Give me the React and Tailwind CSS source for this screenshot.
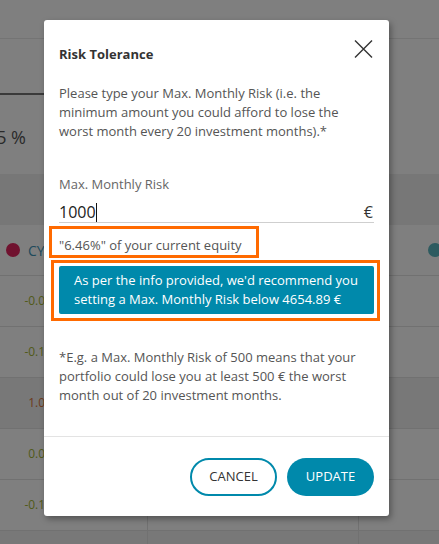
import React from "react";

const TEAL = "bg-[#0089ab]";

const rows = [
  { kind: "name" },
  { value: "-0.02", tone: "text-[#a3b536]" },
  { value: "-0.11", tone: "text-[#a3b536]" },
  { value: "1.04", tone: "text-[#d9773a]", shaded: true },
  { value: "0.03", tone: "text-[#a3b536]" },
  { value: "-0.12", tone: "text-[#a3b536]" },
];

const Row = ({ row }) => (
  <div
    className={`grid grid-cols-[147px_211px_1fr] h-[51px] border-b border-[#e2e2e2] ${
      row.shaded ? "bg-[#f0f0f0]" : ""
    }`}
  >
    <div className="flex items-center">
      {row.kind === "name" ? (
        <div className="flex items-center pl-[6px] gap-[8px]">
          <span className="w-[14px] h-[14px] rounded-full bg-[#e0245e]" />
          <span className="text-[14px] text-[#3e94b8]">CYBR</span>
        </div>
      ) : (
        <div className={`w-[52px] text-right text-[12px] ${row.tone}`}>{row.value}</div>
      )}
    </div>
    <div className="border-l border-[#e2e2e2]" />
    <div className="border-l border-[#e2e2e2] flex items-center pl-[69px]">
      {row.kind === "name" && <span className="w-[14px] h-[14px] rounded-full bg-[#5cb6c0] shrink-0" />}
    </div>
  </div>
);

const CloseIcon = () => (
  <svg width="19" height="18" viewBox="0 0 19 18" fill="none" stroke="#333" strokeWidth="1.4">
    <path d="M1 0.5 L18 17.5 M18 0.5 L1 17.5" />
  </svg>
);

export default function App() {
  return (
    <div className="relative w-full h-[544px] overflow-hidden bg-white font-['Open_Sans',sans-serif]">
      {/* page behind the dialog */}
      <div className="h-[39px] border-b border-[#e8e8e8]" />
      <div className="h-[56px] flex flex-col justify-end">
        <div className="w-[140px] h-[2px] bg-[#757575]" />
      </div>
      <div className="h-[79px] flex items-center pt-[5px]">
        <div className="w-[26px] overflow-hidden flex justify-end whitespace-nowrap text-[18px] text-[#555]">
          0.55 %
        </div>
      </div>
      <div className="h-[51px] bg-[#eeeeee]" />
      {rows.map((row, i) => (
        <Row key={i} row={row} />
      ))}
      <div className="grid grid-cols-[147px_211px_1fr] h-[40px] bg-[#f0f0f0]">
        <div />
        <div className="border-l border-[#e2e2e2]" />
        <div className="border-l border-[#e2e2e2]" />
      </div>

      {/* backdrop */}
      <div className="absolute inset-0 bg-black/50" />

      {/* dialog */}
      <div className="absolute left-[44px] top-[20px] w-[345px] h-[496px] bg-white rounded-[3px] shadow-[2px_3px_6px_rgba(0,0,0,0.35)] flex flex-col">
        <div className="px-[15px] pt-[20px] flex justify-between items-start">
          <h2 className="pt-[5px] text-[13px] leading-[18px] font-bold text-[#333]">Risk Tolerance</h2>
          <button className="mr-[1px]">
            <CloseIcon />
          </button>
        </div>

        <div className="px-[15px]">
          <p className="mt-[21px] text-[13px] leading-[19px] text-[#555]">
            Please type your Max. Monthly Risk (i.e. the minimum amount you could afford to lose the
            worst month every 20 investment months).*
          </p>

          <div className="mt-[34px] text-[13px] leading-[19px] text-[#666]">Max. Monthly Risk</div>
          <div className="h-[29px] pt-[8px] flex items-center justify-between border-b border-[#cfcfcf]">
            <div className="flex items-center text-[16px] text-[#222]">
              1000
              <span className="w-[1px] h-[19px] bg-[#111]" />
            </div>
            <span className="text-[16px] text-[#333] pr-[1px]">€</span>
          </div>

          <div className="relative mt-[13px] text-[13px] leading-[19px] text-[#555]">
            &quot;6.46%&quot; of your current equity
            <span className="absolute left-[-10px] top-[-10px] w-[210px] h-[32px] border-[3px] border-[#ff6a00]" />
          </div>

          <div className="relative mt-[11px]">
            <div className={`${TEAL} rounded-[2px] h-[48px] px-[15px] pt-[5px] text-[13px] leading-[19px] text-white`}>
              As per the info provided, we&apos;d recommend you setting a Max. Monthly Risk below 4654.89 €
            </div>
            <span className="absolute left-[-8px] right-[-6px] top-[-6px] bottom-[-7px] border-[3px] border-[#ff6a00]" />
          </div>

          <p className="mt-[34px] text-[13px] leading-[19px] text-[#555]">
            *E.g. a Max. Monthly Risk of 500 means that your portfolio could lose you at least 500 € the
            worst month out of 20 investment months.
          </p>
        </div>

        <div className="mt-[31px] border-t border-[#e3e3e3]" />

        <div className="px-[15px] pt-[21px] flex justify-end gap-[10px]">
          <button className="w-[87px] h-[38px] rounded-full border-2 border-[#0089ab] text-[13px] text-[#333] uppercase">
            Cancel
          </button>
          <button className={`w-[87px] h-[38px] rounded-full ${TEAL} text-[13px] text-white uppercase`}>
            Update
          </button>
        </div>
      </div>
    </div>
  );
}
